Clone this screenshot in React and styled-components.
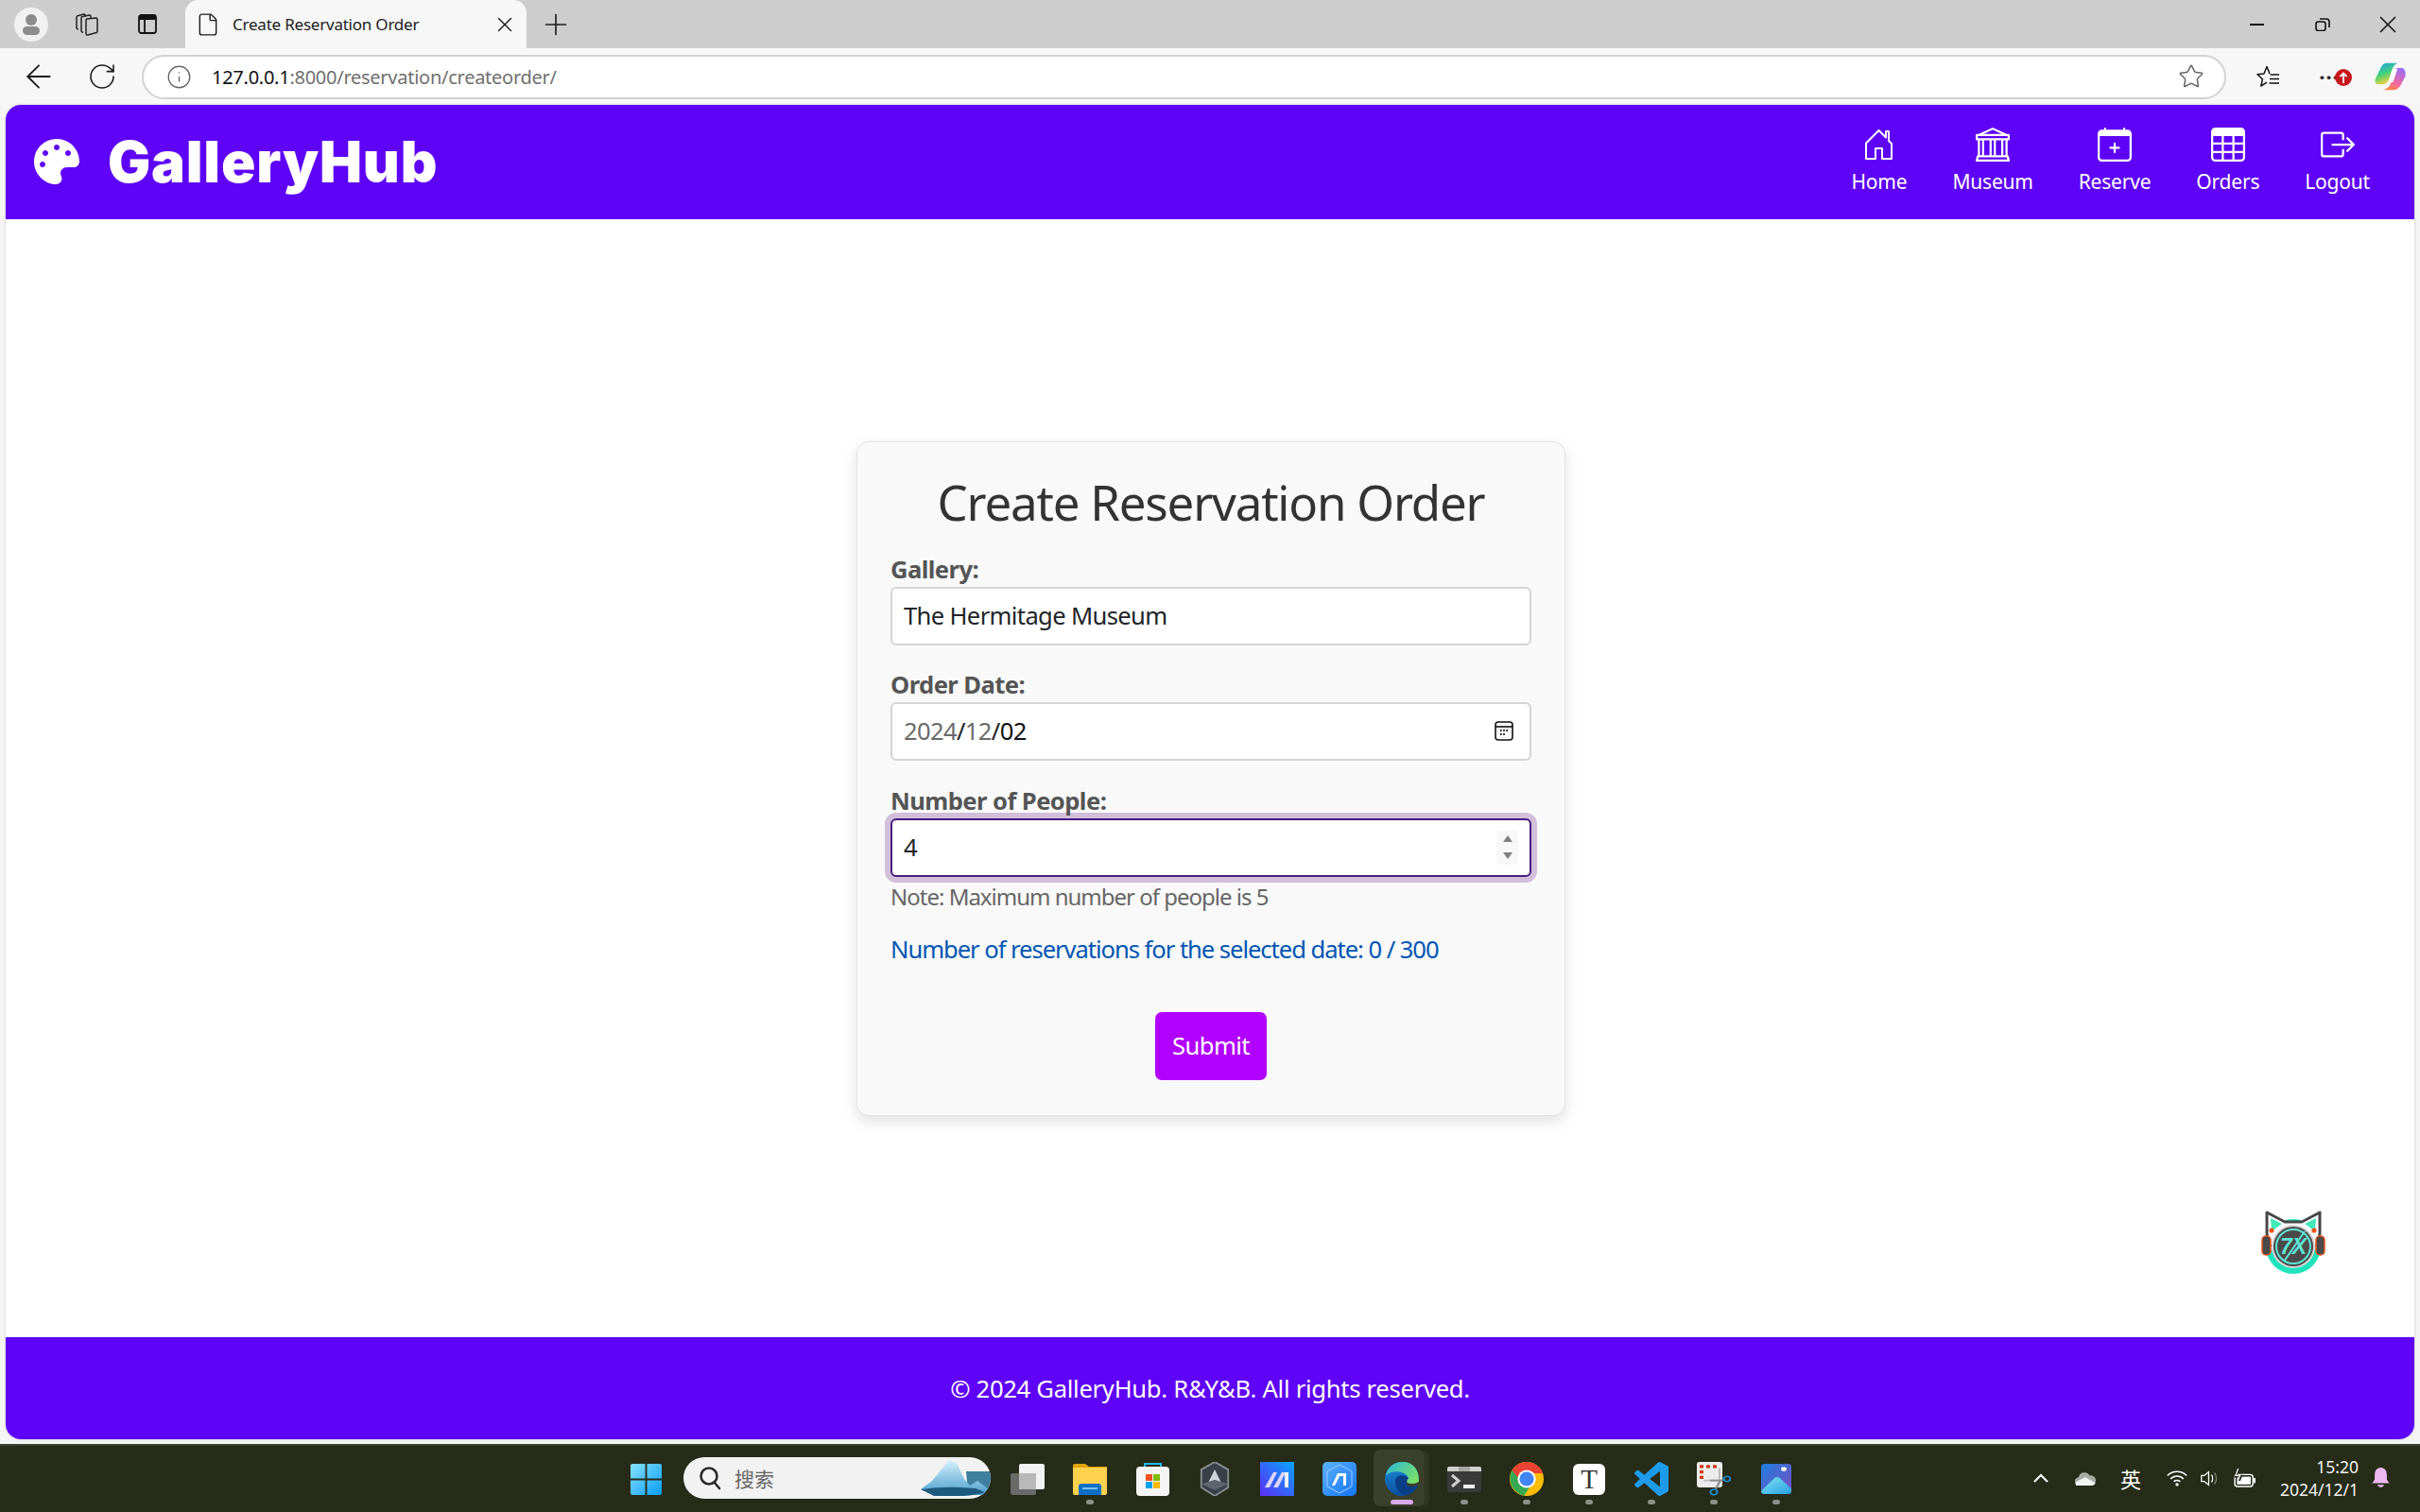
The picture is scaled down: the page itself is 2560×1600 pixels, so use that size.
import React from "react";
import styled, { createGlobalStyle } from "styled-components";
import { ArrowLeft, File, Info, Plus, RotateCw, Star, X } from "lucide-react";
import { BsBank, BsBoxArrowRight, BsCalendarPlus, BsTable } from "react-icons/bs";
import { FaPalette } from "react-icons/fa";

const UI_FONT = `"Noto Sans", "Noto Sans CJK SC", sans-serif`;

const GlobalStyle = createGlobalStyle`
  html, body { margin: 0; padding: 0; }
  body { font-family: ${UI_FONT}; background: #f5f5f5; }
  * { box-sizing: border-box; }
`;

const Screen = styled.div`
  display: flex;
  flex-direction: column;
  width: 2560px;
  height: 1600px;
  position: relative;
  overflow: hidden;
  background: #f5f5f5;
`;

/* browser chrome */
const TabBar = styled.div`
  display: flex;
  align-items: stretch;
  height: 51px;
  padding-left: 8px;
  background: #cdcdcd;
`;

const Slot = styled.div`
  display: flex;
  align-items: center;
  justify-content: center;
  flex: none;
  width: ${(p) => p.$w}px;
  margin-left: ${(p) => p.$ml || 0}px;
  color: #1c1c1c;
`;

const Tab = styled.div`
  display: flex;
  align-items: center;
  flex: none;
  width: 361px;
  margin-left: 10px;
  padding-left: 11px;
  background: #f7f7f7;
  border-radius: 14px 14px 0 0;
  color: #1c1c1c;
`;

const TabTitle = styled.span`
  flex: 1;
  margin-left: 13px;
  font-size: 17px;
  letter-spacing: -0.22px;
  white-space: nowrap;
`;

const Spacer = styled.div`
  flex: 1;
`;

const Minus = styled.span`
  display: block;
  width: 15px;
  height: 2px;
  background: #111;
`;

const Toolbar = styled.div`
  display: flex;
  align-items: center;
  height: 60px;
  padding-left: 7px;
  background: #f7f7f7;
`;

const AddressBar = styled.div`
  display: flex;
  align-items: center;
  flex: none;
  width: 2205px;
  height: 47px;
  margin-left: 9px;
  padding: 0 21px 0 24px;
  background: #fff;
  border: 2px solid #d2d2d2;
  border-radius: 24px;
`;

const Url = styled.span`
  flex: 1;
  margin-left: 21px;
  font-size: 20px;
  letter-spacing: -0.26px;
  color: #6f6f6f;
  b {
    font-weight: 400;
    color: #111;
  }
`;

const MoreButton = styled.div`
  position: relative;
  font-size: 22px;
  font-weight: 700;
  letter-spacing: 1px;
  line-height: 1;
  color: #222;
`;

const UpdateBadge = styled.span`
  display: flex;
  align-items: center;
  justify-content: center;
  position: absolute;
  right: -13px;
  top: 3px;
  width: 18px;
  height: 18px;
  border-radius: 50%;
  background: #c4161c;
`;

/* page */
const Page = styled.div`
  display: flex;
  flex-direction: column;
  flex: 1;
  margin: 0 6px;
  background: #fff;
  border-radius: 16px;
  box-shadow: 0 0 3px rgba(0, 0, 0, 0.2);
  overflow: hidden;
`;

const Header = styled.header`
  display: flex;
  align-items: center;
  justify-content: space-between;
  flex: none;
  height: 121px;
  padding: 0 47px 0 30px;
  background: #5e03f6;
  color: #fff;
`;

const Brand = styled.div`
  display: flex;
  align-items: center;
  gap: 30px;
  font-family: Inter, sans-serif;
  font-size: 60px;
  font-weight: 900;
  letter-spacing: 0.85px;
  line-height: 72px;
  padding-bottom: 2px;
`;

const Nav = styled.nav`
  display: flex;
  gap: 48px;
`;

const NavItem = styled.div`
  display: flex;
  flex-direction: column;
  align-items: center;
  gap: 6px;
  padding-bottom: 2px;
  font-size: 21px;
  font-weight: 400;
  line-height: 30px;
  letter-spacing: -0.2px;
`;

const NavIcon = styled.span`
  display: flex;
  align-items: center;
  justify-content: center;
  height: 36px;
`;

const Main = styled.main`
  display: flex;
  align-items: center;
  justify-content: center;
  flex: 1;
  padding-left: 2px;
`;

const Card = styled.div`
  width: 750px;
  padding: 33px 35px 37px;
  background: #f9f9f9;
  border: 1px solid #e3e3e3;
  border-radius: 13px;
  box-shadow: 0 6px 16px rgba(0, 0, 0, 0.12);
`;

const Title = styled.h1`
  margin: 0 0 22px;
  font-size: 51px;
  font-weight: 400;
  line-height: 61px;
  letter-spacing: -1.2px;
  text-align: center;
  color: #333;
`;

const Label = styled.label`
  display: block;
  height: 37px;
  font-size: 25.6px;
  font-weight: 700;
  line-height: 37px;
  letter-spacing: -0.57px;
  color: #555;
`;

const Field = styled.div`
  display: flex;
  align-items: center;
  justify-content: space-between;
  height: 62px;
  margin-bottom: ${(p) => p.$mb || 0}px;
  padding: 0 12px;
  background: #fff;
  border: 2px solid ${(p) => (p.$focused ? "#4a1c80" : "#d4d4d4")};
  border-radius: 6px;
  font-size: 25.6px;
  letter-spacing: -0.65px;
  color: #212529;
  box-shadow: ${(p) => (p.$focused ? "0 0 0 6px #d2bfd9" : "none")};
`;

const DatePart = styled.span`
  color: ${(p) => (p.$muted ? "#6b6b6b" : "#111")};
`;

const CalendarSlot = styled.span`
  display: flex;
  margin-right: 5px;
`;

const Spinner = styled.div`
  display: flex;
  flex-direction: column;
  align-items: center;
  justify-content: center;
  gap: 11px;
  width: 22px;
  height: 36px;
  background: #f8f8f8;
`;

const Arrow = styled.span`
  width: 0;
  height: 0;
  border-left: 5px solid transparent;
  border-right: 5px solid transparent;
  border-${(p) => (p.$up ? "bottom" : "top")}: 7px solid #808080;
`;

const Note = styled.p`
  margin: 2px 0 18px;
  font-size: 24px;
  line-height: 38px;
  letter-spacing: -1px;
  color: #666;
`;

const Count = styled.p`
  margin: 0 0 47px;
  font-size: 25.6px;
  line-height: 38px;
  letter-spacing: -1.05px;
  color: #0056b3;
`;

const SubmitRow = styled.div`
  display: flex;
  justify-content: center;
`;

const Submit = styled.button`
  width: 118px;
  height: 72px;
  padding: 0;
  background: #b100ff;
  border: 0;
  border-radius: 7px;
  font-family: inherit;
  font-size: 25.6px;
  letter-spacing: -0.6px;
  color: #fff;
`;

const Footer = styled.footer`
  display: flex;
  align-items: center;
  justify-content: center;
  flex: none;
  height: 108px;
  background: #5e03f6;
  font-size: 25.6px;
  letter-spacing: -0.28px;
  color: #fff;
`;

const Mascot = styled.div`
  position: absolute;
  left: 2392px;
  top: 1281px;
  width: 68px;
  height: 68px;
`;

/* windows taskbar */
const Taskbar = styled.div`
  display: flex;
  align-items: flex-start;
  flex: none;
  height: 72px;
  margin-top: 5px;
  padding-left: 650px;
  background: #262c18;
  border-top: 2px solid #3c4030;
`;

const AppSlot = styled.div`
  display: flex;
  flex-direction: column;
  align-items: center;
  flex: none;
  width: 66px;
  padding-top: 17px;
  position: relative;
  &::before {
    content: "";
    display: ${(p) => (p.$active ? "block" : "none")};
    position: absolute;
    left: 3px;
    top: 4px;
    width: 54px;
    height: 60px;
    background: #3a4029;
    border-radius: 7px;
    box-shadow: 6px 0 0 -1px #2f3521;
  }
`;

const AppIcon = styled.span`
  display: flex;
  align-items: center;
  justify-content: center;
  position: relative;
  height: 36px;
`;

const RunDot = styled.span`
  position: relative;
  width: ${(p) => (p.$active ? 24 : 8)}px;
  height: 5px;
  margin-top: 4px;
  border-radius: 3px;
  background: ${(p) => (p.$active ? "#d9a8e8" : p.$hidden ? "transparent" : "#8e9086")};
`;

const SearchBox = styled.div`
  display: flex;
  align-items: center;
  flex: none;
  width: 325px;
  height: 44px;
  margin: 12px 6px 0 7px;
  padding-left: 16px;
  background: #f2f2f2;
  border-radius: 22px;
  overflow: hidden;
`;

const SearchText = styled.span`
  flex: 1;
  margin-left: 14px;
  font-size: 21px;
  color: #666;
`;

const Tray = styled.div`
  display: flex;
  align-items: center;
  height: 70px;
  margin-left: auto;
  padding: 0 19px 2px 0;
  color: #fff;
`;

const ImeText = styled.span`
  font-size: 22px;
  color: #fff;
`;

const Clock = styled.div`
  flex: none;
  width: 93px;
  font-size: 17.5px;
  line-height: 24px;
  text-align: right;
  white-space: nowrap;
  color: #f2f2f2;
`;

const HomeGlyph = () => (
  <svg width="31" height="34" viewBox="0 0 31 34" fill="none" stroke="#fff" strokeWidth="2" strokeLinejoin="round">
    <path d="M2 15.5 L15.5 2 L23 9.5 V3 H26 V13 L29 16 V32 H19 V21 H12 V32 H2Z" />
  </svg>
);

const AvatarIcon = () => (
  <svg width="36" height="36" viewBox="0 0 36 36">
    <circle cx="18" cy="18" r="18" fill="#f1f1f1" />
    <circle cx="18" cy="13" r="6" fill="#8c8c8c" />
    <rect x="9" y="20" width="18" height="9" rx="4.5" fill="#8c8c8c" />
  </svg>
);

const CollectionsIcon = () => (
  <svg width="24" height="24" viewBox="0 0 24 24" fill="none" stroke="#222" strokeWidth="1.5" strokeLinejoin="round">
    <path d="M12 6 L21.5 5 A1.5 1.5 0 0 1 23 6.5 V19 A1.5 1.5 0 0 1 22 20.5 L13 23 A1.5 1.5 0 0 1 11 21.5 V7.5 A1.5 1.5 0 0 1 12 6Z" />
    <path d="M16 5 V3.5 A1.5 1.5 0 0 0 14.5 2 L7.5 3.5 A1.5 1.5 0 0 0 6 5 V18.5 A1.5 1.5 0 0 0 8 20" />
    <path d="M10 3 V2 A1 1 0 0 0 9 1 L3 2.5 A2 2 0 0 0 1 4.5 V15.5 A2 2 0 0 0 3 17" />
  </svg>
);

const VerticalTabsIcon = () => (
  <svg width="20" height="21" viewBox="0 0 20 21" fill="none" stroke="#111" strokeWidth="1.8">
    <rect x="1" y="1" width="18" height="19" rx="2.5" />
    <path d="M1 4 H19" strokeWidth="4" />
    <path d="M7 5 V20" />
  </svg>
);

const RestoreIcon = () => (
  <svg width="16" height="14" viewBox="0 0 16 14" fill="none" stroke="#111" strokeWidth="1.6">
    <rect x="1" y="4" width="10" height="9.5" rx="2.5" />
    <path d="M5 1 H12 A3 3 0 0 1 15 4 V10" />
  </svg>
);

const FavoritesIcon = () => (
  <svg width="25" height="24" viewBox="0 0 25 24" fill="none" stroke="#111" strokeWidth="1.5" strokeLinejoin="round">
    <path d="M14 9 L11 1.5 L8 9 L1 9.8 L6.4 14.8 L4.8 22 L11 18.2" />
    <path d="M14.5 10 H24 M14 14.5 H24 M13.5 19 H24" />
  </svg>
);

const CopilotIcon = () => (
  <svg width="33" height="30" viewBox="0 0 34 40" preserveAspectRatio="none">
    <defs>
      <linearGradient id="copA" x1="0" y1="0" x2="0.4" y2="1">
        <stop offset="0" stopColor="#1f9cf0" />
        <stop offset="0.55" stopColor="#3fd07a" />
        <stop offset="1" stopColor="#f5d33c" />
      </linearGradient>
      <linearGradient id="copB" x1="0.6" y1="0" x2="0.2" y2="1">
        <stop offset="0" stopColor="#a06cf0" />
        <stop offset="0.6" stopColor="#ef6aa0" />
        <stop offset="1" stopColor="#f98a3c" />
      </linearGradient>
    </defs>
    <path d="M13 1 H25 C20 4 19 10 17 18 C15 26 14 31 8 31 H4 Q-1 30 1 23 L7 7 Q9 1 13 1Z" fill="url(#copA)" />
    <path d="M23 8 H31 Q35 13 33 21 L28 33 Q25 39 20 39 H9 C16 37 18 30 20 22 C21 16 22 11 23 8Z" fill="url(#copB)" />
    <path d="M21 9 H25 L20 28 H16Z" fill="#fff" />
  </svg>
);

const BadgeArrow = () => (
  <svg width="10" height="12" viewBox="0 0 10 12" fill="none" stroke="#fff" strokeWidth="1.8">
    <path d="M5 12 V2 M1.5 5 L5 1.5 L8.5 5" />
  </svg>
);

const CalendarGlyph = () => (
  <svg width="20" height="21" viewBox="0 0 20 21" fill="none" stroke="#111" strokeWidth="1.6">
    <rect x="1" y="1" width="18" height="19" rx="3" />
    <path d="M1 6 H19" />
    <path d="M6 10 H7.6 M9.2 10 H10.8 M12.4 10 H14 M6 14 H7.6 M9.2 14 H10.8" strokeWidth="2" />
  </svg>
);

const WinLogo = () => (
  <svg width="35" height="35" viewBox="0 0 36 36">
    <defs>
      <linearGradient id="winG" x1="0" y1="0" x2="1" y2="1">
        <stop offset="0" stopColor="#86e3ff" />
        <stop offset="1" stopColor="#0a9cf5" />
      </linearGradient>
    </defs>
    <path d="M1 3 A2 2 0 0 1 3 1 H17 V17 H1Z M19 1 H33 A2 2 0 0 1 35 3 V17 H19Z M1 19 H17 V35 H3 A2 2 0 0 1 1 33Z M19 19 H35 V33 A2 2 0 0 1 33 35 H19Z" fill="url(#winG)" />
  </svg>
);

const SearchGlass = () => (
  <svg width="24" height="26" viewBox="0 0 24 26" fill="none" stroke="#2b2b2b" strokeWidth="2.6">
    <circle cx="11" cy="11" r="8.5" />
    <path d="M17 18 L22 24" strokeLinecap="round" />
  </svg>
);

const Iceberg = () => (
  <svg width="74" height="38" viewBox="0 0 74 38">
    <defs>
      <linearGradient id="iceA" x1="0" y1="0" x2="0" y2="1">
        <stop offset="0" stopColor="#d6f1fb" />
        <stop offset="1" stopColor="#4a9ecf" />
      </linearGradient>
    </defs>
    <path d="M48 12 H74 V30 Q66 37 50 34Z" fill="#3f7f9f" />
    <path d="M0 31 L12 22 L22 10 L30 0 L38 3 L46 20 L52 27 L60 22 L72 31 L66 37 H14 Z" fill="url(#iceA)" />
    <path d="M0 31 Q28 27 58 30 L68 34 Q50 40 14 38Z" fill="#1e5a80" />
  </svg>
);

const TaskViewIcon = () => (
  <svg width="36" height="33" viewBox="0 0 36 33">
    <rect x="0" y="10" width="27" height="23" rx="2" fill="#6a6a6a" />
    <rect x="9" y="0" width="27" height="27" rx="2" fill="#f2f2f2" />
    <rect x="9" y="10" width="18" height="17" fill="#b9b9b9" />
  </svg>
);

const ExplorerIcon = () => (
  <svg width="36" height="33" viewBox="0 0 36 33">
    <path d="M0 2 A2 2 0 0 1 2 0 H13 L17 3 H36 V30 H0Z" fill="#e0a40a" />
    <path d="M0 4 H36 V31 A2 2 0 0 1 34 33 H2 A2 2 0 0 1 0 31Z" fill="#ffd24d" />
    <path d="M6 33 V24 A3 3 0 0 1 9 21 H27 A3 3 0 0 1 30 24 V33Z" fill="#0f6fc6" />
    <rect x="10" y="25" width="16" height="2" fill="#7ac1f2" />
  </svg>
);

const StoreIcon = () => (
  <svg width="35" height="35" viewBox="0 0 35 35">
    <path d="M9 6 V1 H26 V6" fill="none" stroke="#22b8ec" strokeWidth="2" />
    <rect x="0" y="4" width="35" height="31" rx="4" fill="#f5f5f5" />
    <rect x="10" y="12" width="7" height="7" fill="#f25022" />
    <rect x="18" y="12" width="7" height="7" fill="#7fba00" />
    <rect x="10" y="20" width="7" height="7" fill="#00a4ef" />
    <rect x="18" y="20" width="7" height="7" fill="#ffb900" />
  </svg>
);

const HexIcon = () => (
  <svg width="32" height="36" viewBox="0 0 36 40" preserveAspectRatio="none">
    <path d="M18 0 L34 9 V30 L18 40 L2 30 V9Z" fill="#3a4048" stroke="#8b8f96" strokeWidth="2" />
    <path d="M18 9 L26 25 L18 21 L10 25Z" fill="#cfd2d6" />
    <path d="M2 26 L18 21 L34 26 L18 33Z" fill="#5f656d" />
  </svg>
);

const SquareAppIcon = () => (
  <svg width="36" height="36" viewBox="0 0 36 36">
    <defs>
      <linearGradient id="sqA" x1="1" y1="0" x2="0" y2="1">
        <stop offset="0" stopColor="#0aa5ff" />
        <stop offset="1" stopColor="#5b2df5" />
      </linearGradient>
    </defs>
    <rect width="36" height="36" fill="url(#sqA)" />
    <path d="M5 27 L14 11 H18 L10 27Z M14 27 L23 11 H27 L19 27Z" fill="#dcd6fb" />
    <path d="M26 11 H30 V27 H26Z" fill="#fff" opacity="0.9" />
  </svg>
);

const BlueHexIcon = () => (
  <svg width="36" height="36" viewBox="0 0 36 36">
    <defs>
      <linearGradient id="bhA" x1="0" y1="0" x2="1" y2="1">
        <stop offset="0" stopColor="#5cb0fa" />
        <stop offset="1" stopColor="#1476f5" />
      </linearGradient>
    </defs>
    <rect width="36" height="36" rx="5" fill="url(#bhA)" />
    <path d="M18 3 L31 10 V26 L18 33 L5 26 V10Z" fill="none" stroke="#9ccdfb" strokeWidth="1" />
    <path d="M10 25 L16 12 H25 V25 H22 V15 H18 L13 25Z" fill="#fff" />
  </svg>
);

const EdgeIcon = () => (
  <svg width="36" height="36" viewBox="0 0 36 44" preserveAspectRatio="none">
    <defs>
      <linearGradient id="edgeA" x1="0" y1="0" x2="1" y2="0.6">
        <stop offset="0" stopColor="#2ab6dc" />
        <stop offset="1" stopColor="#7adf6a" />
      </linearGradient>
      <linearGradient id="edgeB" x1="0" y1="0" x2="0" y2="1">
        <stop offset="0" stopColor="#1c8fd8" />
        <stop offset="1" stopColor="#0c4fa0" />
      </linearGradient>
    </defs>
    <ellipse cx="18" cy="22" rx="18" ry="22" fill="url(#edgeB)" />
    <path d="M1 18 C3 6 10 0 19 0 C30 0 36 10 36 24 C36 28 33 29 28 29 C21 29 23 24 25 21 C23 12 7 9 1 18Z" fill="url(#edgeA)" />
    <path d="M11 25 C11 17 20 15 25 21 C21 25 23 31 30 31 C33 31 34 30 35 30 C33 38 26 43 20 43 C14 40 11 32 11 25Z" fill="#0a3f86" />
    <path d="M23 29 C27 33 32 32 36 29 L36 26 C30 29 26 29 23 26Z" fill="#3a4029" />
  </svg>
);

const TerminalIcon = () => (
  <svg width="36" height="27" viewBox="0 0 36 27">
    <rect width="36" height="27" rx="2" fill="#3a3a3a" />
    <path d="M0 2 A2 2 0 0 1 2 0 H12 V5 H0Z" fill="#d0d0d0" />
    <rect x="12" width="12" height="5" fill="#a8a8a8" />
    <path d="M24 0 H34 A2 2 0 0 1 36 2 V5 H24Z" fill="#d0d0d0" />
    <path d="M5 9 L12 15 L5 21" fill="none" stroke="#cfcfcf" strokeWidth="3" />
    <rect x="17" y="19" width="12" height="4" fill="#eee" />
  </svg>
);

const ChromeIcon = () => (
  <svg width="36" height="36" viewBox="0 0 36 36">
    <circle cx="18" cy="18" r="18" fill="#fbbc04" />
    <path d="M18 0 C26 0 33 5 35.2 12 H18 C13 12 9.5 14 8 17 L2.5 9 C6 3 12 0 18 0Z" fill="#ea4335" />
    <path d="M2.5 9 C-2 17 0 30 15 36 L23 24 C18 27 11 24 9 17Z" fill="#34a853" />
    <circle cx="18" cy="18" r="9.6" fill="#fff" />
    <circle cx="18" cy="18" r="7.6" fill="#4285f4" />
  </svg>
);

const TypewriterIcon = () => (
  <svg width="34" height="33" viewBox="0 0 34 33">
    <rect width="34" height="33" rx="6" fill="#fff" />
    <text x="17" y="26" textAnchor="middle" fontFamily="Liberation Serif, serif" fontSize="29" fill="#333">T</text>
  </svg>
);

const VsCodeIcon = () => (
  <svg width="36" height="36" viewBox="0 0 24 24">
    <path fill="#1d9bea" d="M23.15 2.587L18.21.21a1.494 1.494 0 0 0-1.705.29l-9.46 8.63-4.12-3.128a.999.999 0 0 0-1.276.057L.327 7.261A1 1 0 0 0 .326 8.74L3.899 12 .326 15.26a1 1 0 0 0 .001 1.479L1.65 17.94a.999.999 0 0 0 1.276.057l4.12-3.128 9.46 8.63a1.492 1.492 0 0 0 1.704.29l4.942-2.377A1.5 1.5 0 0 0 24 20.06V3.939a1.5 1.5 0 0 0-.85-1.352zm-5.146 14.861L10.826 12l7.178-5.448v10.896z" />
  </svg>
);

const SnipIcon = () => (
  <svg width="36" height="36" viewBox="0 0 36 44" preserveAspectRatio="none">
    <rect width="27" height="33" rx="3" fill="#ececec" />
    <path d="M3 4 H7 V8 H3Z M10 4 H14 V8 H10Z M17 4 H21 V8 H17Z M3 11 H7 V15 H3Z M3 18 H7 V22 H3Z" fill="#d13b12" />
    <path d="M7 24 H24 V8" fill="none" stroke="#bbb" strokeWidth="2" />
    <path d="M14 24 H26 L29 22 M25 24 L20 35" stroke="#8b8b8b" strokeWidth="2.4" fill="none" />
    <circle cx="32" cy="22" r="3.4" fill="none" stroke="#1b8ad0" strokeWidth="2" />
    <circle cx="18" cy="39" r="3.6" fill="none" stroke="#1b8ad0" strokeWidth="2" />
  </svg>
);

const PhotosIcon = () => (
  <svg width="32" height="32" viewBox="0 0 32 40" preserveAspectRatio="none">
    <defs>
      <linearGradient id="phA" x1="0" y1="0" x2="1" y2="1">
        <stop offset="0" stopColor="#1f7ee0" />
        <stop offset="1" stopColor="#7a4fc0" />
      </linearGradient>
      <linearGradient id="phB" x1="0" y1="0" x2="1" y2="1">
        <stop offset="0" stopColor="#7de4f7" />
        <stop offset="1" stopColor="#2a9fe0" />
      </linearGradient>
    </defs>
    <rect width="32" height="40" rx="4" fill="url(#phA)" />
    <circle cx="24" cy="7" r="3" fill="#f1f1f1" />
    <path d="M0 36 L14 19 Q17 16 20 19 L32 33 V36 Q32 40 28 40 H4 Q0 40 0 36Z" fill="url(#phB)" />
  </svg>
);

const ChevronUp = () => (
  <svg width="16" height="10" viewBox="0 0 16 10" fill="none" stroke="#fff" strokeWidth="2">
    <path d="M1 9 L8 2 L15 9" />
  </svg>
);

const CloudIcon = () => (
  <svg width="24" height="15" viewBox="0 0 26 17">
    <path d="M6 17 A5 5 0 0 1 5 7 A7 7 0 0 1 18 5 A6 6 0 0 1 25 13 Q24 17 20 17Z" fill="#a9aca2" />
    <path d="M2 17 Q0 14 3 12 L13 7 L25 14 Q24 17 20 17Z" fill="#f4f4f4" />
  </svg>
);

const WifiIcon = () => (
  <svg width="24" height="17" viewBox="0 0 26 20" fill="none" stroke="#fff" strokeWidth="1.8">
    <path d="M1 6.5 A17 17 0 0 1 25 6.5" />
    <path d="M5 10.5 A11 11 0 0 1 21 10.5" />
    <path d="M9 14 A6 6 0 0 1 17 14" />
    <circle cx="13" cy="17.5" r="2" fill="#fff" stroke="none" />
  </svg>
);

const VolumeIcon = () => (
  <svg width="23" height="19" viewBox="0 0 26 22" fill="none" stroke="#fff" strokeWidth="1.7">
    <path d="M1 7 H5 L11 2 V20 L5 15 H1Z" />
    <path d="M15 6 Q18 11 15 16" />
    <path d="M19 3 Q24 11 19 19" stroke="#7c8072" />
  </svg>
);

const BatteryIcon = () => (
  <svg width="24" height="20" viewBox="0 0 26 22" fill="none">
    <rect x="1" y="7" width="21" height="14" rx="3" stroke="#fff" strokeWidth="1.6" />
    <rect x="3.5" y="9.5" width="16" height="9" fill="#fff" />
    <rect x="23" y="11" width="2" height="6" fill="#fff" />
    <path d="M5 0 L2 9 H8 L6 14" stroke="#262c18" strokeWidth="3" />
    <path d="M5 0 L2 8 H7 L5 13" stroke="#fff" strokeWidth="1.4" />
  </svg>
);

const BellIcon = () => (
  <svg width="19" height="22" viewBox="0 0 20 24">
    <path d="M10 0 C15 0 17 4 17 9 V14 L20 18 H0 L3 14 V9 C3 4 5 0 10 0Z" fill="#ecb8f0" />
    <path d="M6 20 H14 Q13 23 10 23 Q7 23 6 20Z" fill="#ecb8f0" />
  </svg>
);

const MascotArt = () => (
  <svg width="68" height="68" viewBox="0 0 68 68">
    <circle cx="34" cy="38" r="29" fill="#1fe3bd" />
    <path d="M6 2 L25 12 H43 L62 2 L62 24 L60 38 H8 L6 24Z" fill="#fff" stroke="#474747" strokeWidth="3" strokeLinejoin="round" />
    <path d="M10 8 L22 14 L11 22Z M58 8 L46 14 L57 22Z" fill="#41e8b8" />
    <path d="M5 38 H63 L62 42 H6Z" fill="#fff" />
    <path d="M7 42 A28 27 0 0 0 61 42Z" fill="#1fe3bd" />
    <rect x="1" y="27" width="9" height="20" rx="4" fill="#4a4a4a" stroke="#e8541c" strokeWidth="1.5" />
    <rect x="58" y="27" width="9" height="20" rx="4" fill="#4a4a4a" stroke="#e8541c" strokeWidth="1.5" />
    <circle cx="34" cy="38" r="23" fill="#d8d8d8" />
    <circle cx="34" cy="38" r="21" fill="#4a4a4a" />
    <circle cx="34" cy="38" r="18" fill="none" stroke="#5fe6d4" strokeWidth="2" />
    <path d="M24 54 L46 22" stroke="#5fe6d4" strokeWidth="2" />
    <text x="34" y="46" textAnchor="middle" fontFamily="Liberation Sans, sans-serif" fontSize="23" fontWeight="700" fontStyle="italic" fill="#5fe6d4">7X</text>
    <circle cx="11" cy="21" r="2.6" fill="#e8541c" />
    <circle cx="56" cy="21" r="2.6" fill="#e8541c" />
  </svg>
);

const NAV_ITEMS = [
  { label: "Home", icon: <HomeGlyph /> },
  { label: "Museum", icon: <BsBank size={36} /> },
  { label: "Reserve", icon: <BsCalendarPlus size={36} /> },
  { label: "Orders", icon: <BsTable size={36} /> },
  { label: "Logout", icon: <BsBoxArrowRight size={36} /> },
];

const APPS = [
  { key: "taskview", Icon: TaskViewIcon, idle: true },
  { key: "explorer", Icon: ExplorerIcon },
  { key: "store", Icon: StoreIcon, idle: true },
  { key: "hex", Icon: HexIcon, idle: true },
  { key: "square", Icon: SquareAppIcon, idle: true },
  { key: "bluehex", Icon: BlueHexIcon, idle: true },
  { key: "edge", Icon: EdgeIcon, active: true },
  { key: "terminal", Icon: TerminalIcon },
  { key: "chrome", Icon: ChromeIcon },
  { key: "typewriter", Icon: TypewriterIcon },
  { key: "vscode", Icon: VsCodeIcon },
  { key: "snip", Icon: SnipIcon },
  { key: "photos", Icon: PhotosIcon },
];

export default function App() {
  return (
    <Screen>
      <GlobalStyle />
      <TabBar>
        <Slot $w={50}><AvatarIcon /></Slot>
        <Slot $w={68}><CollectionsIcon /></Slot>
        <Slot $w={60}><VerticalTabsIcon /></Slot>
        <Tab>
          <File size={26} strokeWidth={1.3} />
          <TabTitle>Create Reservation Order</TabTitle>
          <Slot $w={46}><X size={26} strokeWidth={1.3} /></Slot>
        </Tab>
        <Slot $w={62}><Plus size={36} strokeWidth={1.1} /></Slot>
        <Spacer />
        <Slot $w={69}><Minus /></Slot>
        <Slot $w={69}><RestoreIcon /></Slot>
        <Slot $w={69}><X size={30} strokeWidth={1.4} /></Slot>
      </TabBar>

      <Toolbar>
        <Slot $w={68}><ArrowLeft size={40} strokeWidth={1.1} /></Slot>
        <Slot $w={66}><RotateCw size={32} strokeWidth={1.2} /></Slot>
        <AddressBar>
          <Info size={27} color="#666" strokeWidth={1.2} />
          <Url><b>127.0.0.1</b>:8000/reservation/createorder/</Url>
          <Star size={28} color="#666" strokeWidth={1.3} />
        </AddressBar>
        <Slot $w={88}><FavoritesIcon /></Slot>
        <Slot $w={42}>
          <MoreButton>
            ···
            <UpdateBadge><BadgeArrow /></UpdateBadge>
          </MoreButton>
        </Slot>
        <Slot $w={64} $ml={11}><CopilotIcon /></Slot>
      </Toolbar>

      <Page>
        <Header>
          <Brand>
            <FaPalette size={48} />
            GalleryHub
          </Brand>
          <Nav>
            {NAV_ITEMS.map(({ label, icon }) => (
              <NavItem key={label}>
                <NavIcon>{icon}</NavIcon>
                {label}
              </NavItem>
            ))}
          </Nav>
        </Header>

        <Main>
          <Card>
            <Title>Create Reservation Order</Title>
            <Label>Gallery:</Label>
            <Field $mb={23}>The Hermitage Museum</Field>
            <Label>Order Date:</Label>
            <Field $mb={24}>
              <span>
                <DatePart $muted>2024</DatePart>/<DatePart $muted>12</DatePart>/<DatePart>02</DatePart>
              </span>
              <CalendarSlot><CalendarGlyph /></CalendarSlot>
            </Field>
            <Label>Number of People:</Label>
            <Field $focused>
              4
              <Spinner>
                <Arrow $up />
                <Arrow />
              </Spinner>
            </Field>
            <Note>Note: Maximum number of people is 5</Note>
            <Count>Number of reservations for the selected date: 0 / 300</Count>
            <SubmitRow>
              <Submit>Submit</Submit>
            </SubmitRow>
          </Card>
        </Main>

        <Footer>© 2024 GalleryHub. R&amp;Y&amp;B. All rights reserved.</Footer>
      </Page>

      <Mascot><MascotArt /></Mascot>

      <Taskbar>
        <AppSlot>
          <AppIcon><WinLogo /></AppIcon>
        </AppSlot>
        <SearchBox>
          <SearchGlass />
          <SearchText>搜索</SearchText>
          <Iceberg />
        </SearchBox>
        {APPS.map(({ key, Icon, active, idle }) => (
          <AppSlot key={key} $active={active}>
            <AppIcon><Icon /></AppIcon>
            <RunDot $active={active} $hidden={idle} />
          </AppSlot>
        ))}
        <Tray>
          <Slot $w={46}><ChevronUp /></Slot>
          <Slot $w={48}><CloudIcon /></Slot>
          <Slot $w={48}><ImeText>英</ImeText></Slot>
          <Slot $w={50}><WifiIcon /></Slot>
          <Slot $w={20}><VolumeIcon /></Slot>
          <Slot $w={54}><BatteryIcon /></Slot>
          <Clock>15:20<br />2024/12/1</Clock>
          <Slot $w={46}><BellIcon /></Slot>
        </Tray>
      </Taskbar>
    </Screen>
  );
}
